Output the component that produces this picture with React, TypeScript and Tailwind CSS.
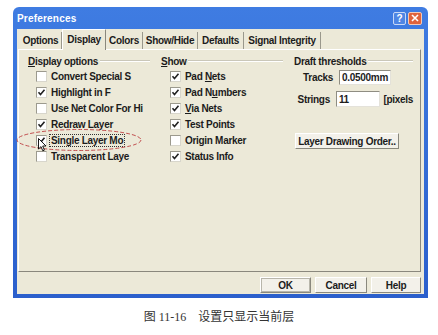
import type { ReactNode } from 'react';

const leftOptions = [
    { label: 'Convert Special S', checked: false },
    { label: 'Highlight in F', checked: true },
    { label: 'Use Net Color For Hi', checked: false },
    { label: 'Redraw Layer', checked: true },
    { label: 'Single Layer Mo', checked: true, focus: true },
    { label: 'Transparent Laye', checked: false },
];

const showOptions: { label: ReactNode; checked: boolean }[] = [
    { label: <>Pad <u>N</u>ets</>, checked: true },
    { label: <>Pad N<u>u</u>mbers</>, checked: true },
    { label: <><u>V</u>ia Nets</>, checked: true },
    { label: 'Test Points', checked: true },
    { label: 'Origin Marker', checked: false },
    { label: 'Status Info', checked: true },
];

const tabs = [
    { label: 'Options', w: 'w-[42px]' },
    { label: 'Display', w: 'w-[44px]', active: true },
    { label: 'Colors', w: 'w-[37px]' },
    { label: 'Show/Hide', w: 'w-[55px]' },
    { label: 'Defaults', w: 'w-[46px]' },
    { label: 'Signal Integrity', w: 'w-[77px]' },
];

function Check({ checked }: { checked: boolean }) {
    return (
        <span className="flex h-[11px] w-[11px] shrink-0 items-center justify-center border border-t-[#9c9a8e] border-l-[#9c9a8e] border-r-[#d8d6cc] border-b-[#d8d6cc] bg-white">
            {checked && (
                <svg width="9" height="9" viewBox="0 0 9 9">
                    <polyline points="1.5,4.2 3.5,6.5 7.5,1.8" fill="none" stroke="#222" strokeWidth="1.6" />
                </svg>
            )}
        </span>
    );
}

function GroupHeader({ children }: { children: ReactNode }) {
    return (
        <div className="flex h-[14px] items-center">
            <span>{children}</span>
            <span className="ml-[2px] h-[2px] flex-1 border-t border-b border-t-[#cac7b9] border-b-white" />
        </div>
    );
}

function Button({ children, className = '' }: { children: ReactNode; className?: string }) {
    return (
        <div
            className={`flex h-[16px] items-center justify-center border border-t-white border-l-white border-r-[#8a887d] border-b-[#8a887d] bg-[#f3f1ea] ${className}`}
        >
            {children}
        </div>
    );
}

export default function App() {
    return (
        <div className="relative h-[335px] w-[438px] overflow-hidden bg-white font-['Liberation_Sans',Arial,sans-serif] text-[10px] font-bold tracking-[-0.3px] text-[#1c1c1c]">
            <div className="ml-[13px] mt-[7px] flex w-[415px] flex-col rounded-t-[6px] bg-linear-to-b from-[#3f7ce2] to-[#2b5fcc]">
                {/* title bar */}
                <div className="flex h-[22px] items-center justify-between pl-[4px] pr-[6px]">
                    <span className="tracking-[0.2px] text-white">Preferences</span>
                    <div className="flex gap-[2px]">
                        <span className="flex h-[13px] w-[13px] items-center justify-center rounded-[2px] border border-[#c8d8f6] bg-[#4f86e4] text-[10px] text-white">?</span>
                        <span className="flex h-[13px] w-[14px] items-center justify-center rounded-[2px] border border-[#f3c9b6] bg-[#e0633c]">
                            <svg width="8" height="8" viewBox="0 0 8 8">
                                <path d="M1 1L7 7M7 1L1 7" stroke="white" strokeWidth="1.6" />
                            </svg>
                        </span>
                    </div>
                </div>

                {/* client area */}
                <div className="mx-[4px] mb-[4px] flex h-[265px] flex-col bg-[#ece9d8]">
                    {/* tabs */}
                    <div className="relative z-10 flex h-[20px] items-end pl-[3px]">
                        {tabs.map((t) =>
                            t.active ? (
                                <div
                                    key={t.label}
                                    className={`${t.w} -mb-px flex h-[21px] items-center justify-center border-t border-l border-r border-t-white border-l-white border-r-[#8a887d] bg-[#ece9d8] pb-[2px]`}
                                >
                                    {t.label}
                                </div>
                            ) : (
                                <div
                                    key={t.label}
                                    className={`${t.w} flex h-[17px] items-center justify-center border-r border-r-[#9a988c]`}
                                >
                                    {t.label}
                                </div>
                            ),
                        )}
                    </div>

                    {/* tab panel */}
                    <div className="ml-px mr-[3px] flex h-[223px] gap-[11px] border border-t-white border-l-white border-r-[#8a887d] border-b-[#8a887d] pl-[9px] pt-[4px]">
                        <div className="flex w-[122px] flex-col">
                            <GroupHeader>
                                <u>D</u>isplay options
                            </GroupHeader>
                            <div className="flex flex-col pl-[8px]">
                                {leftOptions.map((o) => (
                                    <div key={o.label} className="flex h-[16px] items-center gap-[2px] whitespace-nowrap">
                                        <Check checked={o.checked} />
                                        <span className={o.focus ? 'border border-dotted border-[#333] px-px leading-[11px]' : 'px-[2px]'}>{o.label}</span>
                                    </div>
                                ))}
                            </div>
                        </div>

                        <div className="flex w-[122px] flex-col">
                            <GroupHeader>
                                <u>S</u>how
                            </GroupHeader>
                            <div className="flex flex-col pl-[9px]">
                                {showOptions.map((o, i) => (
                                    <div key={i} className="flex h-[16px] items-center gap-[2px] whitespace-nowrap">
                                        <Check checked={o.checked} />
                                        <span className="px-[2px]">{o.label}</span>
                                    </div>
                                ))}
                            </div>
                        </div>

                        <div className="flex w-[119px] flex-col">
                            <GroupHeader>Draft thresholds</GroupHeader>
                            <div className="mt-[2px] flex items-center">
                                <span className="w-[39px] text-right">Tracks</span>
                                <div className="ml-[6px] flex h-[15px] w-[52px] items-center overflow-hidden whitespace-nowrap border border-t-[#8f8d82] border-l-[#8f8d82] border-r-[#e4e2da] border-b-[#e4e2da] bg-white pl-[2px]">
                                    0.0500mm
                                </div>
                            </div>
                            <div className="mt-[6px] flex items-center whitespace-nowrap">
                                <span className="w-[39px] text-right">Strings</span>
                                <div className="ml-[6px] flex h-[16px] w-[48px] items-center border border-t-[#8f8d82] border-l-[#8f8d82] border-r-[#e4e2da] border-b-[#e4e2da] bg-white pl-[2px]">
                                    11
                                </div>
                                <span className="ml-[3px]">[pixels</span>
                            </div>
                            <Button className="ml-px mt-[26px] w-[104px]">Layer Drawing Order..</Button>
                        </div>
                    </div>

                    {/* dialog buttons */}
                    <div className="flex justify-end gap-[4px] pr-[3px] pt-[5px]">
                        <Button className="w-[51px] border-[#3a3a3a] outline outline-1 -outline-offset-2 outline-[#b8b6ab]">OK</Button>
                        <Button className="w-[52px]">Cancel</Button>
                        <Button className="w-[50px]">Help</Button>
                    </div>
                </div>
            </div>

            <p className="mt-[10px] text-center font-['Liberation_Serif','Noto_Sans_CJK_SC',serif] text-[12px] font-normal tracking-normal text-[#333]">
                图 11-16&nbsp;&nbsp;&nbsp;&nbsp;设置只显示当前层
            </p>

            {/* annotation ellipse */}
            <svg className="absolute left-[15px] top-[128px]" width="130" height="25" viewBox="0 0 130 25">
                <ellipse cx="64" cy="12" rx="62" ry="10.5" fill="none" stroke="#c25050" strokeWidth="1" strokeDasharray="4 2" />
            </svg>

            {/* mouse cursor */}
            <svg className="absolute left-[38px] top-[138px]" width="9" height="14" viewBox="0 0 9 14">
                <path d="M0.5 0.5 L0.5 11 L3 8.6 L4.8 12.8 L6.4 12.1 L4.7 8 L8 8 Z" fill="white" stroke="black" strokeWidth="0.9" strokeLinejoin="round" />
            </svg>
        </div>
    );
}
